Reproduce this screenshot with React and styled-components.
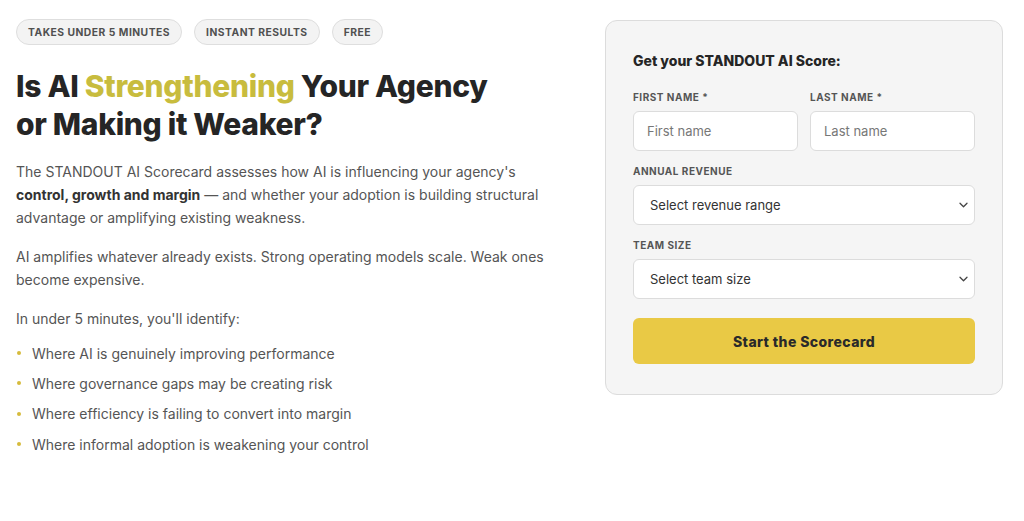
import React from 'react';
import styled, { createGlobalStyle } from 'styled-components';

const GlobalStyle = createGlobalStyle`
  html, body {
    margin: 0;
    padding: 0;
    background: #ffffff;
  }
  body {
    font-family: Inter, 'Noto Sans', sans-serif;
    color: #222;
  }
  * {
    box-sizing: border-box;
  }
`;

const Page = styled.div`
  display: flex;
  align-items: flex-start;
  justify-content: space-between;
  padding: 19px 21px 0 16px;
`;

const Intro = styled.section`
  width: 545px;
`;

const Badges = styled.div`
  display: flex;
  gap: 12px;
`;

const Badge = styled.span`
  display: inline-flex;
  align-items: center;
  height: 26px;
  padding: 0 11px;
  border: 1px solid #dedede;
  border-radius: 13px;
  background: #f3f3f3;
  color: #505050;
  font-size: 10.3px;
  font-weight: 700;
  letter-spacing: 0.5px;
  text-transform: uppercase;
`;

const Title = styled.h1`
  margin: 22px 0 0;
  font-size: 30px;
  line-height: 38px;
  font-weight: 800;
  letter-spacing: -0.3px;
  color: #252525;
`;

const Highlight = styled.span`
  color: #c8bc3e;
`;

const Text = styled.p`
  margin: ${({ $top }) => $top || 16}px 0 0;
  font-size: 14px;
  line-height: 23px;
  color: #555;

  strong {
    color: #333;
    font-weight: 700;
  }
`;

const List = styled.ul`
  list-style: none;
  margin: 8px 0 0;
  padding: 0;
`;

const Item = styled.li`
  display: flex;
  align-items: center;
  height: 30.3px;
  font-size: 14px;
  color: #555;

  &::before {
    content: '';
    width: 4px;
    height: 4px;
    border-radius: 50%;
    background: #d6bb3c;
    margin: 0 11px 0 1px;
  }
`;

const Card = styled.aside`
  width: 398px;
  margin-top: 1px;
  padding: 31px 27px 30px;
  background: #f5f5f5;
  border: 1px solid #dcdcdc;
  border-radius: 12px;
`;

const CardTitle = styled.h2`
  margin: 0;
  font-size: 14px;
  line-height: 18px;
  font-weight: 800;
  color: #252525;
`;

const Row = styled.div`
  display: grid;
  grid-template-columns: 1fr 1fr;
  gap: 12px;
  margin-top: 20px;
`;

const Field = styled.label`
  display: flex;
  flex-direction: column;
  min-width: 0;
  margin-top: ${({ $top }) => $top || 0}px;
`;

const Label = styled.span`
  font-size: 10px;
  line-height: 14px;
  font-weight: 700;
  letter-spacing: 0.5px;
  text-transform: uppercase;
  color: #555;
  margin-bottom: 7px;
`;

const Input = styled.input`
  width: 100%;
  min-width: 0;
  height: 40px;
  padding: 0 13px;
  border: 1px solid #dcdcdc;
  border-radius: 6px;
  background: #fff;
  font-family: inherit;
  font-size: 13px;
  color: #333;
  outline: none;

  &::placeholder {
    color: #777;
  }
`;

const SelectBox = styled.div`
  display: flex;
  align-items: center;
  justify-content: space-between;
  height: 40px;
  padding: 0 6px 0 16px;
  border: 1px solid #dcdcdc;
  border-radius: 6px;
  background: #fff;
  font-size: 13px;
  color: #333;
`;

const Button = styled.button`
  width: 100%;
  height: 46px;
  margin-top: 19px;
  border: none;
  border-radius: 6px;
  background: #e9c945;
  color: #2a2a2a;
  font-family: inherit;
  font-size: 14px;
  font-weight: 800;
  letter-spacing: 0.4px;
  cursor: pointer;
`;

const Chevron = () => (
  <svg width="9" height="6" viewBox="0 0 9 6" fill="none">
    <path d="M1 1.2l3.5 3.5 3.5-3.5" stroke="#444" strokeWidth="1.3" strokeLinecap="round" strokeLinejoin="round" />
  </svg>
);

const points = [
  'Where AI is genuinely improving performance',
  'Where governance gaps may be creating risk',
  'Where efficiency is failing to convert into margin',
  'Where informal adoption is weakening your control',
];

const App = () => (
  <>
    <GlobalStyle />
    <Page>
      <Intro>
        <Badges>
          <Badge>Takes under 5 minutes</Badge>
          <Badge>Instant results</Badge>
          <Badge>Free</Badge>
        </Badges>
        <Title>
          Is AI <Highlight>Strengthening</Highlight> Your Agency
          <br />
          or Making it Weaker?
        </Title>
        <Text $top={17}>
          The STANDOUT AI Scorecard assesses how AI is influencing your agency's{' '}
          <strong>control, growth and margin</strong> — and whether your adoption is building
          structural advantage or amplifying existing weakness.
        </Text>
        <Text $top={16}>
          AI amplifies whatever already exists. Strong operating models scale. Weak ones become
          expensive.
        </Text>
        <Text $top={16}>In under 5 minutes, you'll identify:</Text>
        <List>
          {points.map((p) => (
            <Item key={p}>{p}</Item>
          ))}
        </List>
      </Intro>

      <Card>
        <CardTitle>Get your STANDOUT AI Score:</CardTitle>
        <Row>
          <Field>
            <Label>First name *</Label>
            <Input placeholder="First name" />
          </Field>
          <Field>
            <Label>Last name *</Label>
            <Input placeholder="Last name" />
          </Field>
        </Row>
        <Field $top={13}>
          <Label>Annual revenue</Label>
          <SelectBox>
            Select revenue range
            <Chevron />
          </SelectBox>
        </Field>
        <Field $top={13}>
          <Label>Team size</Label>
          <SelectBox>
            Select team size
            <Chevron />
          </SelectBox>
        </Field>
        <Button>Start the Scorecard</Button>
      </Card>
    </Page>
  </>
);

export default App;
